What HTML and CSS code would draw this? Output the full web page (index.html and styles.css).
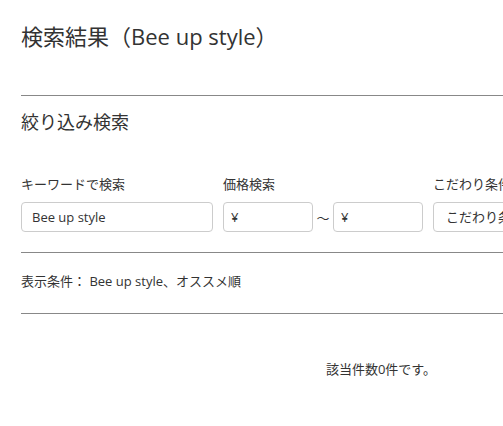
FILE: index.html
```html
<!DOCTYPE html>
<html lang="ja">
<head>
  <meta charset="UTF-8">
  <title>検索結果（Bee up style）</title>
  <link rel="stylesheet" href="styles.css">
</head>
<body>
  <div class="page">
    <!-- 見出し -->
    <h1 class="page-title">検索結果（Bee up style）</h1>
    <hr class="rule">

    <!-- 絞り込み -->
    <h2 class="section-title">絞り込み検索</h2>
    <div class="filters">
      <div class="field field-keyword">
        <label>キーワードで検索</label>
        <div class="box">Bee up style</div>
      </div>
      <div class="field">
        <label>価格検索</label>
        <div class="price-row">
          <div class="box box-price">¥</div>
          <span class="tilde">～</span>
          <div class="box box-price">¥</div>
        </div>
      </div>
      <div class="field field-select">
        <label>こだわり条件</label>
        <div class="box box-select">こだわり条件を選択</div>
      </div>
    </div>
    <hr class="rule rule-filters">

    <p class="conditions">表示条件： Bee up style、オススメ順</p>
    <hr class="rule">

    <p class="result">該当件数0件です。</p>
  </div>
</body>
</html>
```

FILE: styles.css
```css
html, body {
  overflow-x: hidden;
}

body {
  margin: 0;
  padding: 0;
  font-family: "Open Sans", "Noto Sans CJK JP", sans-serif;
  color: #333;
  background: #fff;
}

.page {
  width: 720px;
  padding: 20px 0 40px 21px;
}

.page-title {
  font-size: 22px;
  font-weight: normal;
  line-height: 32px;
  margin: 0 0 43px;
}

.rule {
  border: none;
  border-top: 1px solid #888;
  margin: 0;
}

.section-title {
  font-size: 18px;
  font-weight: normal;
  line-height: 26px;
  margin: 13px 0 0;
}

.filters {
  display: flex;
  gap: 10px;
  margin-top: 39px;
}

.field label {
  display: block;
  font-size: 13px;
  line-height: 20px;
  margin-bottom: 8px;
  white-space: nowrap;
}

.box {
  box-sizing: border-box;
  height: 30px;
  border: 1px solid #ccc;
  border-radius: 4px;
  padding: 0 10px;
  font-size: 13px;
  line-height: 28px;
  white-space: nowrap;
  overflow: hidden;
}

.field-keyword .box {
  width: 192px;
}

.price-row {
  display: flex;
  align-items: center;
}

.box-price {
  width: 90px;
  padding-left: 7px;
}

.tilde {
  width: 20px;
  text-align: center;
  font-size: 13px;
}

.field-select {
  min-width: 0;
}

.box-select {
  width: 200px;
  padding-left: 12px;
}

.rule-filters {
  margin-top: 20px;
}

.conditions {
  font-size: 13px;
  line-height: 20px;
  margin: 18px 0 22px;
}

.result {
  font-size: 13px;
  line-height: 20px;
  text-align: center;
  margin: 45px 0 0;
}
```
